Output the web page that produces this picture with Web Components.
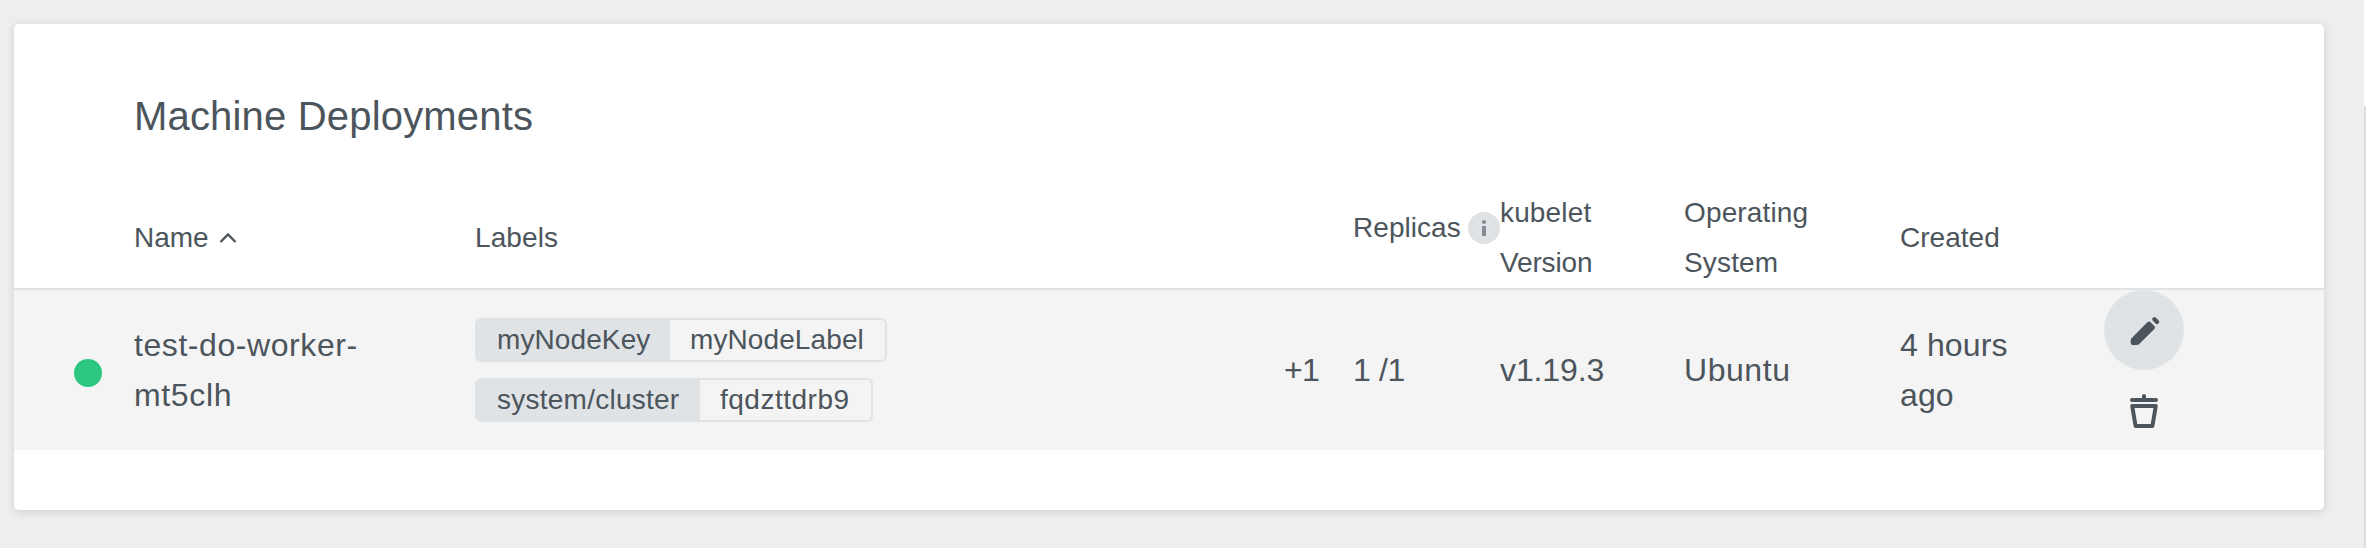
<!DOCTYPE html>
<html lang="en">
<head>
<meta charset="utf-8">
<title>Machine Deployments</title>
<style>
  html, body { margin: 0; height: 100%; }
  body {
    display: flex;
    overflow: hidden;
    background: #edeef0;
    color: #4c555c;
    font-family: "Liberation Sans", Arial, Helvetica, sans-serif;
    --surface: #dfe3e6;
    --columns: 120px 341px 809px 69px 147px 184px 216px 204px 1fr;
  }
</style>
</head>
<body>
<md-card>
  <span slot="title">Machine Deployments</span>
  <md-header-row>
    <span></span>
    <md-heading sorted>Name</md-heading>
    <md-heading style="letter-spacing:.1px">Labels</md-heading>
    <span></span>
    <md-heading info style="letter-spacing:.05px">Replicas</md-heading>
    <md-heading><span style="letter-spacing:.15px">kubelet</span><br><span style="letter-spacing:-.14px">Version</span></md-heading>
    <md-heading style="letter-spacing:.15px">Operating<br>System</md-heading>
    <md-heading style="letter-spacing:.02px">Created</md-heading>
    <span></span>
  </md-header-row>
  <md-row>
    <md-status></md-status>
    <md-cell><span style="letter-spacing:.57px">test-do-worker-</span><br><span style="letter-spacing:.65px">mt5clh</span></md-cell>
    <md-labels>
      <md-label style="--key:193px;--value:215px;letter-spacing:.1px"><span slot="key">myNodeKey</span>myNodeLabel</md-label>
      <md-label style="--key:223px;--value:171px;letter-spacing:.25px"><span slot="key">system/cluster</span><span style="letter-spacing:.5px">fqdzttdrb9</span></md-label>
    </md-labels>
    <md-cell style="letter-spacing:-.8px">+1</md-cell>
    <md-cell style="letter-spacing:-.4px">1 /1</md-cell>
    <md-cell style="letter-spacing:-.11px">v1.19.3</md-cell>
    <md-cell style="letter-spacing:.55px">Ubuntu</md-cell>
    <md-cell style="letter-spacing:.13px">4 hours<br>ago</md-cell>
    <md-actions></md-actions>
  </md-row>
</md-card>
<md-scroll-edge></md-scroll-edge>

<script>
  const define = (name, html) => {
    const template = document.createElement('template');
    template.innerHTML = html;
    customElements.define(name, class extends HTMLElement {
      constructor() {
        super();
        this.attachShadow({ mode: 'open' }).append(template.content.cloneNode(true));
      }
    });
  };

  define('md-card', `
    <style>
      :host { display: block; box-sizing: border-box; width: 2310px; height: 486px; margin: 24px 40px 0 14px;
        padding-top: 68px; background: #fff; border-radius: 5px; flex: none;
        box-shadow: 0 2px 10px rgba(0, 0, 0, .13); }
      h2 { margin: 0 0 48px; padding-left: 120px; font-size: 40px; font-weight: 400; line-height: 48px; letter-spacing: .18px; }
    </style>
    <h2><slot name="title"></slot></h2>
    <slot></slot>`);

  define('md-header-row', `
    <style>
      :host { display: grid; grid-template-columns: var(--columns); align-items: center; height: 100px;
        border-bottom: 2px solid var(--surface); font-size: 28px; line-height: 50px; }
    </style>
    <slot></slot>`);

  define('md-heading', `
    <style>
      :host { display: flex; align-items: center; white-space: nowrap; }
      :host([info]) { justify-content: space-between; margin-bottom: 20px; }
      svg { display: none; flex: none; }
      :host([sorted]) .sort, :host([info]) .info { display: block; }
      .sort { margin-left: 10px; }
    </style>
    <div><slot></slot></div>
    <svg class="sort" width="18" height="12" viewBox="0 0 18 12"><path d="M1.500 10 9 2.500l7.500 7.500" fill="none" stroke="#4c555c" stroke-width="2.300"/></svg>
    <svg class="info" width="32" height="32" viewBox="0 0 32 32"><circle cx="16" cy="16" r="16" fill="#dfe3e6"/><circle cx="16" cy="10" r="2.1" fill="#848b94"/><path d="M14 14h4v10h-4z" fill="#848b94"/></svg>`);

  define('md-row', `
    <style>
      :host { display: grid; grid-template-columns: var(--columns); align-items: center; height: 160px;
        background: #f4f4f4; font-size: 32px; line-height: 50px; }
    </style>
    <slot></slot>`);

  define('md-cell', `<style>:host { display: block; white-space: nowrap; }</style><slot></slot>`);

  define('md-status', `
    <style>:host { display: block; width: 28px; height: 28px; margin: 6px 0 0 60px; border-radius: 50%; background: #2dc681; }</style>`);

  define('md-labels', `
    <style>:host { display: flex; flex-direction: column; align-items: flex-start; gap: 16px; }</style>
    <slot></slot>`);

  define('md-label', `
    <style>
      :host { display: flex; border: 2px solid var(--surface); border-radius: 6px; font-size: 28px; line-height: 40px; white-space: nowrap; }
      div { box-sizing: border-box; padding-left: 20px; }
      .key { width: var(--key); background: var(--surface); }
      .value { width: var(--value); }
    </style>
    <div class="key"><slot name="key"></slot></div>
    <div class="value"><slot></slot></div>`);

  define('md-actions', `
    <style>
      :host { display: flex; flex-direction: column; }
      button { width: 80px; height: 80px; padding: 0; border: 0; border-radius: 50%; background: none; color: inherit; }
      .edit { background: var(--surface); }
      svg { display: block; }
    </style>
    <button class="edit" aria-label="Edit"><svg width="80" height="80" viewBox="0 0 80 80" fill="#4c555c"><path d="M26.700 50.300q0-1.200.8-2L43.600 32.100q1.400-1.300 2.800 0l4 4q1.300 1.400 0 2.800L35 54.300q-.8.7-2 .7h-4.300q-2 0-2-2z"/><path d="M50.400 29.300l2.600 2.600" stroke="#4c555c" stroke-width="4.400" stroke-linecap="round"/></svg></button>
    <button aria-label="Delete"><svg width="80" height="80" viewBox="0 0 80 80" fill="none" stroke="#4c555c" stroke-width="4" stroke-linecap="round" stroke-linejoin="round"><path d="M28 30h24M40 26v3M28.200 36h23.600L48.400 56H31.600z"/></svg></button>`);

  define('md-scroll-edge', `
    <style>
      :host { display: flex; flex-direction: column; width: 2px; height: 548px; flex: none; }
      .top { height: 106px; background: #fff; }
      .thumb { flex: 1; background: #dddee0; }
    </style>
    <div class="top"></div><div class="thumb"></div>`);
</script>
</body>
</html>
